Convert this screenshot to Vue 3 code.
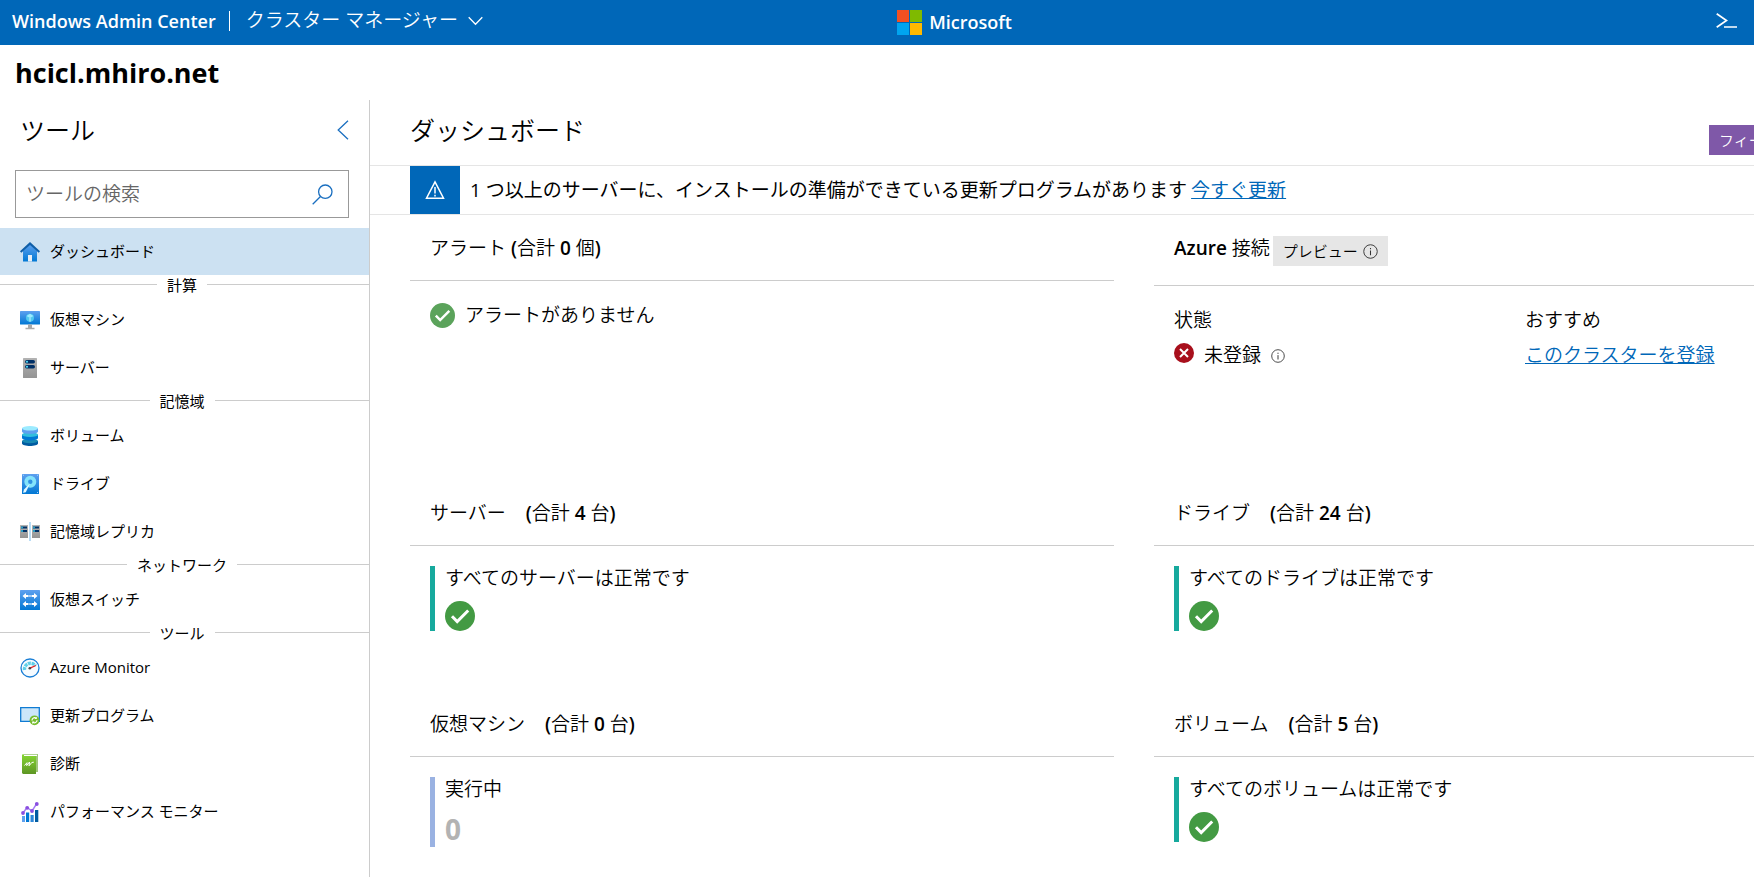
<script setup>
import { ref } from 'vue'

const search = ref('')

const groups = [
  { title: '', items: [{ id: 'home', label: 'ダッシュボード', active: true }] },
  {
    title: '計算',
    items: [
      { id: 'vm', label: '仮想マシン' },
      { id: 'server', label: 'サーバー' },
    ],
  },
  {
    title: '記憶域',
    items: [
      { id: 'volume', label: 'ボリューム' },
      { id: 'drive', label: 'ドライブ' },
      { id: 'replica', label: '記憶域レプリカ' },
    ],
  },
  { title: 'ネットワーク', items: [{ id: 'switch', label: '仮想スイッチ' }] },
  {
    title: 'ツール',
    items: [
      { id: 'monitor', label: 'Azure Monitor' },
      { id: 'update', label: '更新プログラム' },
      { id: 'diag', label: '診断' },
      { id: 'perf', label: 'パフォーマンス モニター' },
    ],
  },
]

const summaries = [
  { title: 'サーバー', count: 4, text: 'すべてのサーバーは正常です' },
  { title: 'ドライブ', count: 24, text: 'すべてのドライブは正常です' },
  { title: '仮想マシン', count: 0, text: '実行中', value: '0' },
  { title: 'ボリューム', count: 5, text: 'すべてのボリュームは正常です' },
]
</script>

<template>
  <div class="app">
    <svg class="sprite" width="0" height="0" aria-hidden="true">
      <defs>
        <linearGradient id="g-blue" x1="0" y1="0" x2="0" y2="1">
          <stop offset="0" stop-color="#5ea0ef" />
          <stop offset="1" stop-color="#0078d4" />
        </linearGradient>
        <linearGradient id="g-grey" x1="0" y1="0" x2="0" y2="1">
          <stop offset="0" stop-color="#b3b3b3" />
          <stop offset="1" stop-color="#949494" />
        </linearGradient>
        <linearGradient id="g-green" x1="0" y1="0" x2="0" y2="1">
          <stop offset="0" stop-color="#86d633" />
          <stop offset="1" stop-color="#5e9624" />
        </linearGradient>
      </defs>
      <symbol id="i-home" viewBox="0 0 20 20">
        <path d="M3 9 10 2l7 7v10.500H3z" fill="url(#g-blue)" />
        <path d="M10 0 20 9.300 18.700 10.700 10 2.900 1.300 10.700 0 9.300z" fill="#0f5ea8" />
        <path d="M8 13h4v6.500H8z" fill="#e8eef4" />
      </symbol>
      <symbol id="i-vm" viewBox="0 0 20 20">
        <rect y="1" width="20" height="13.500" rx=".6" fill="url(#g-blue)" />
        <circle cx="10" cy="7.800" r="4" fill="#50c8ee" />
        <path d="M10 3.800 13.500 6 10 8 6.500 6z" fill="#9ceaff" />
        <path d="M10 8v3.800" stroke="#c3f1ff" stroke-width="1" />
        <path d="M8 14.500h4v3.200h2.500v1.500h-9v-1.500H8z" fill="#aaa" />
      </symbol>
      <symbol id="i-server" viewBox="0 0 20 20">
        <rect x="3" width="14" height="20" rx=".6" fill="url(#g-grey)" />
        <rect x="5" y="2" width="10" height="3.400" rx="1.700" fill="#003067" />
        <rect x="5" y="7" width="10" height="3.400" rx="1.700" fill="#003067" />
        <circle cx="7" cy="3.700" r="1" fill="#50e6ff" />
        <circle cx="7" cy="8.700" r="1" fill="#50e6ff" />
      </symbol>
      <symbol id="i-volume" viewBox="0 0 20 20">
        <path d="M2 15h16v2.500c0 3.300-16 3.300-16 0z" fill="#005ba1" />
        <ellipse cx="10" cy="15" rx="8" ry="2.200" fill="#198ab3" />
        <path d="M2 8.500h16v3.500c0 3.300-16 3.300-16 0z" fill="#0078d4" />
        <ellipse cx="10" cy="8.700" rx="8" ry="2.300" fill="#32bedd" />
        <path d="M2 2h16v3.500c0 3.200-16 3.200-16 0z" fill="#5ea0ef" />
        <ellipse cx="10" cy="2.300" rx="8" ry="2.300" fill="#9cebff" />
      </symbol>
      <symbol id="i-drive" viewBox="0 0 20 20">
        <rect x="2" width="17" height="20" rx=".5" fill="url(#g-blue)" />
        <circle cx="10.300" cy="7.800" r="6" fill="#83e3fb" />
        <circle cx="10.300" cy="7.800" r="2.200" fill="#3193e2" />
        <path d="M10 9.500 5.800 18.200 3 18.800 4 15.500z" fill="#e2f8ff" />
        <path d="M3 1.300h1M17 1.300h1M17 18.500h1" stroke="#9cd2ff" />
      </symbol>
      <symbol id="i-replica" viewBox="0 0 20 20">
        <path d="M0 3h8v13H0zM12 3h8v13h-8z" fill="url(#g-grey)" />
        <path d="M1 4.500h6v2H1zM1 8h6v2H1zM13 4.500h6v2h-6zM13 8h6v2h-6z" fill="#003067" />
        <path d="M1 4.500h2v2H1zM1 8h2v2H1zM13 4.500h2v2h-2zM13 8h2v2h-2z" fill="#2d9fc4" />
        <path d="M9 0h2v19H9z" fill="#b9dcf5" />
      </symbol>
      <symbol id="i-switch" viewBox="0 0 20 20">
        <rect width="20" height="20" rx=".5" fill="url(#g-blue)" />
        <path d="M2.500 6 6 3v2h2.500v2H6v2zM17.500 6 14 3v2h-2.500v2H14v2zM2.500 14 6 11v2h2.500v2H6v2zM17.500 14 14 11v2h-2.500v2H14v2z" fill="#fff" />
        <path d="M9.300 5h1.400v2H9.300zM9.300 13h1.400v2H9.300z" fill="#d4e8fb" />
      </symbol>
      <symbol id="i-monitor" viewBox="0 0 20 20">
        <circle cx="10" cy="10" r="9" fill="#f6fbff" stroke="#1b7fd6" stroke-width="1.300" />
        <path d="M4.500 12a6 6 0 0 1 11-4" fill="none" stroke="#5fcfe8" stroke-width="3.400" stroke-dasharray="3 .7" />
        <path d="M9.500 10.300 15.800 7.500" stroke="#e62323" stroke-width="1.300" />
        <circle cx="9.800" cy="10.200" r="1.300" fill="#444" />
      </symbol>
      <symbol id="i-update" viewBox="0 0 20 20">
        <path d="M.7 1.700h18.600v13.600H.7z" fill="#cbe6f9" stroke="#0f7bd3" stroke-width="1.300" />
        <circle cx="14.500" cy="14.300" r="4.900" fill="#76bc2d" />
        <path d="M12 14.500a2.600 2.600 0 0 1 4.200-2.200M17 14.100a2.600 2.600 0 0 1-4.200 2.200" fill="none" stroke="#fff" stroke-width="1.200" />
        <path d="M16.800 10.700v2.400h-2.400zM12.200 17.900v-2.400h2.400z" fill="#fff" />
      </symbol>
      <symbol id="i-diag" viewBox="0 0 20 20">
        <path d="M4 0h14v18H4z" fill="#9fc67a" />
        <path d="M4 .8H17V2H4z" fill="#fff" />
        <path d="M2 1C2 .3 3 0 4 .5V2h12v18H3l-1-1z" fill="url(#g-green)" />
        <path d="M4.500 11.500 7 8.700 6.700 11.600 9.500 8 9 11.800 11.800 8.500 13.800 8.200" fill="none" stroke="#fff" stroke-width="1" />
      </symbol>
      <symbol id="i-perf" viewBox="0 0 20 20">
        <path d="M2 14h3v6H2z" fill="#5ea0ef" />
        <path d="M6 10.500h3.200V20H6z" fill="#0078d4" />
        <path d="M10.500 13h3.200v7h-3.200z" fill="#2b86d9" />
        <path d="M15 8h3.300v12H15z" fill="#005ba1" />
        <path d="m3 11 4-5.500 5 3.500 4.500-7" fill="none" stroke="#a67af4" stroke-width="1.400" />
        <g fill="#8a4fe0">
          <circle cx="3" cy="11" r="1.900" /><circle cx="7.200" cy="5.800" r="1.900" />
          <circle cx="12" cy="9" r="1.900" /><circle cx="16.800" cy="2" r="1.900" />
        </g>
      </symbol>
      <symbol id="i-info" viewBox="0 0 16 16">
        <circle cx="8" cy="8" r="7.200" fill="none" stroke="#333" stroke-width="1" />
        <path d="M8 7v5M8 4.200v1.400" stroke="#333" stroke-width="1.100" />
      </symbol>
      <symbol id="i-check" viewBox="0 0 30 30">
        <circle cx="15" cy="15" r="15" fill="currentColor" />
        <path d="m7 15.200 5.200 5.300L23.200 9.500" fill="none" stroke="#fff" stroke-width="3" />
      </symbol>
    </svg>

    <header class="topbar">
      <a class="brand" href="#">Windows Admin Center</a>
      <button class="solution" type="button">
        クラスター マネージャー
        <svg width="15" height="10" viewBox="0 0 15 10" aria-hidden="true">
          <path d="m.7 1.200 6.800 7 6.800-7" fill="none" stroke="#fff" stroke-width="1.300" />
        </svg>
      </button>
      <div class="microsoft">
        <svg width="25" height="25" viewBox="0 0 25 25" aria-hidden="true">
          <path d="M0 0h12v12H0z" fill="#f25022" /><path d="M13 0h12v12H13z" fill="#7fba00" />
          <path d="M0 13h12v12H0z" fill="#00a4ef" /><path d="M13 13h12v12H13z" fill="#ffb900" />
        </svg>
        Microsoft
      </div>
      <button class="shell" type="button" aria-label="PowerShell">
        <svg width="21" height="16" viewBox="0 0 21 16" aria-hidden="true">
          <path d="m.7.800 9.800 6.700L.7 14.200M8 14h13" fill="none" stroke="#fff" stroke-width="1.700" />
        </svg>
      </button>
    </header>

    <h1 class="host">hcicl.mhiro.net</h1>

    <div class="body">
      <aside class="sidebar">
        <div class="side-head">
          <h2>ツール</h2>
          <button type="button" aria-label="折りたたむ">
            <svg width="12" height="20" viewBox="0 0 12 20" aria-hidden="true">
              <path d="m11 .8-9.800 9.200 9.800 9.200" fill="none" stroke="#1a6fc0" stroke-width="1.300" />
            </svg>
          </button>
        </div>
        <form class="search" @submit.prevent>
          <input v-model="search" type="text" placeholder="ツールの検索" aria-label="ツールの検索" />
          <button type="submit" aria-label="検索">
            <svg width="21" height="21" viewBox="0 0 21 21" aria-hidden="true">
              <circle cx="13.300" cy="7.700" r="6.700" fill="none" stroke="#1a6fc0" stroke-width="1.300" />
              <path d="M8.500 12.500.7 20.300" stroke="#1a6fc0" stroke-width="1.300" />
            </svg>
          </button>
        </form>
        <nav>
          <template v-for="g in groups" :key="g.title">
            <h3 v-if="g.title" class="group"><span>{{ g.title }}</span></h3>
            <a v-for="i in g.items" :key="i.id" href="#" class="item" :class="{ active: i.active }">
              <svg width="20" height="20" aria-hidden="true"><use :href="'#i-' + i.id" /></svg>
              {{ i.label }}
            </a>
          </template>
        </nav>
      </aside>

      <main>
        <div class="content">
          <div class="page-head">
            <h2>ダッシュボード</h2>
            <button class="feedback" type="button">フィードバック</button>
          </div>
          <div class="notice">
            <span class="warn">
              <svg width="20" height="20" viewBox="0 0 20 20" aria-hidden="true">
                <path d="M10 1.800 18.500 18.200h-17z" fill="none" stroke="#fff" stroke-width="1.500" />
                <path d="M10 7v6.500M10 14.800v1.600" stroke="#fff" stroke-width="1.500" />
              </svg>
            </span>
            <p>1 つ以上のサーバーに、インストールの準備ができている更新プログラムがあります</p>
            <a href="#">今すぐ更新</a>
          </div>

          <div class="cards">
            <section class="card tall">
              <h3>アラート&nbsp;<b>(</b>合計&nbsp;<b>0</b>&nbsp;個<b>)</b></h3>
              <div class="no-alerts">
                <svg width="25" height="25" aria-hidden="true"><use href="#i-check" /></svg>
                アラートがありません
              </div>
            </section>

            <section class="card tall">
              <h3>
                <b>Azure</b>&nbsp;接続
                <span class="preview">プレビュー
                  <svg width="15" height="15" aria-hidden="true"><use href="#i-info" /></svg>
                </span>
              </h3>
              <dl class="azure">
                <div>
                  <dt>状態</dt>
                  <dd class="unregistered">
                    <svg width="20" height="20" viewBox="0 0 20 20" aria-hidden="true">
                      <circle cx="10" cy="10" r="10" fill="#a80f1c" />
                      <path d="m6 6 8 8M14 6l-8 8" stroke="#fff" stroke-width="2" />
                    </svg>
                    <span>未登録</span>
                    <svg class="info" width="14" height="14" aria-hidden="true"><use href="#i-info" /></svg>
                  </dd>
                </div>
                <div>
                  <dt>おすすめ</dt>
                  <dd><a href="#">このクラスターを登録</a></dd>
                </div>
              </dl>
            </section>

            <section v-for="s in summaries" :key="s.title" class="card">
              <h3>
                {{ s.title }}
                <span class="total"><b>(</b>合計&nbsp;<b>{{ s.count }}</b>&nbsp;台<b>)</b></span>
              </h3>
              <div class="status" :class="{ running: s.value }">
                <p>{{ s.text }}</p>
                <strong v-if="s.value">{{ s.value }}</strong>
                <svg v-else width="30" height="30" aria-hidden="true"><use href="#i-check" /></svg>
              </div>
            </section>
          </div>
        </div>
      </main>
    </div>
  </div>
</template>

<style>
body {
  margin: 0;
  overflow: hidden;
  background: #fff;
}
</style>

<style scoped>
.app {
  display: flex;
  flex-direction: column;
  height: 100vh;
  overflow: hidden;
  color: #000;
  font-family: "Open Sans", "Noto Sans CJK JP", sans-serif;
  font-size: 19px;
  font-weight: 350;
  line-height: 25px;
}
.sprite {
  position: absolute;
}
svg {
  display: block;
  flex: none;
}
h1, h2, h3, p, dl, dd {
  margin: 0;
  font-weight: inherit;
}
b {
  font-weight: 600;
}
button {
  padding: 0;
  border: 0;
  background: none;
  color: inherit;
  font: inherit;
  cursor: pointer;
}
a {
  color: #0067b8;
}

.topbar {
  display: flex;
  align-items: center;
  flex: none;
  height: 45px;
  padding: 0 17px 0 12px;
  box-sizing: border-box;
  background: #0067b8;
  color: #fff;
}
.brand {
  padding-right: 13px;
  border-right: 1px solid #fff;
  color: #fff;
  font-size: 18px;
  font-weight: 600;
  line-height: 20px;
  text-decoration: none;
  margin-bottom: 4px;
}
.solution {
  display: flex;
  align-items: center;
  gap: 10px;
  margin-left: 16px;
  margin-bottom: 4px;
}
.topbar::before,
.topbar::after {
  content: "";
}
.topbar::before {
  order: 1;
  flex: 10;
}
.microsoft {
  order: 2;
  display: flex;
  align-items: center;
  gap: 7px;
  font-size: 18px;
  font-weight: 600;
}
.topbar::after {
  order: 3;
  flex: 17;
}
.shell {
  order: 4;
  margin-bottom: 4px;
}

.host {
  flex: none;
  height: 55px;
  padding: 0 15px;
  font-size: 27px;
  font-weight: 700;
  line-height: 55px;
}
.body {
  display: flex;
  flex: 1;
  min-height: 0;
}
.sidebar {
  flex: none;
  width: 370px;
  box-sizing: border-box;
  border-right: 1px solid #ccc;
}
.side-head {
  display: flex;
  align-items: center;
  justify-content: space-between;
  height: 60px;
  padding: 0 20px;
}
h2 {
  font-size: 25px;
  line-height: 30px;
}
.search {
  display: flex;
  align-items: center;
  height: 48px;
  box-sizing: border-box;
  margin: 10px 20px 10px 15px;
  padding: 0 15px 0 10px;
  border: 1px solid #999;
}
.search input {
  flex: 1;
  min-width: 0;
  padding: 0;
  border: 0;
  outline: 0;
  background: none;
  font: inherit;
}
.search input::placeholder {
  color: #666;
  opacity: 1;
}
nav {
  display: flex;
  flex-direction: column;
  gap: 1px;
  font-size: 15px;
  font-weight: 400;
  line-height: 19px;
}
.item {
  display: flex;
  align-items: center;
  gap: 10px;
  height: 47px;
  padding: 0 20px;
  color: #000;
  text-decoration: none;
}
.item.active {
  background: #cce1f2;
}
.group {
  display: flex;
  gap: 10px;
  font-size: 15px;
}
.group::before,
.group::after {
  content: "";
  height: 8px;
  border-bottom: 1px solid #ccc;
}
.group::before {
  flex: 1 1 0;
}
.group::after {
  flex: 1 1 5px;
}

main {
  flex: 1;
  min-width: 0;
  overflow: hidden;
}
.content {
  min-width: 1528px;
}
.page-head {
  display: flex;
  align-items: center;
  justify-content: space-between;
  height: 65px;
  padding: 0 40px;
}
.page-head h2 {
  padding-bottom: 6px;
}
.feedback {
  align-self: flex-end;
  min-width: 149px;
  height: 30px;
  margin-bottom: 10px;
  padding: 0 10px;
  background: #7f58a8;
  color: #fff;
  font-size: 15px;
  text-align: left;
}
.notice {
  display: flex;
  align-items: center;
  height: 48px;
  padding: 0 40px;
  border: solid #e5e5e5;
  border-width: 1px 0;
  font-weight: 400;
}
.warn {
  display: grid;
  place-items: center;
  width: 50px;
  height: 48px;
  background: #0067b8;
}
.notice p {
  margin: 0 4px 0 10px;
}
.cards {
  display: grid;
  grid-template-columns: repeat(2, minmax(0, 1fr));
  gap: 0 40px;
  padding: 0 40px;
}
.card {
  min-height: 211px;
}
.card.tall {
  min-height: 265px;
}
.card h3 {
  display: flex;
  padding: 21px 20px 19px;
  border-bottom: 1px solid #ccc;
  font-size: 19px;
}
.preview {
  display: flex;
  align-items: center;
  gap: 5px;
  height: 30px;
  margin-left: 3px;
  padding: 0 10px;
  background: #e6e6e6;
  font-size: 15px;
}
.total {
  margin-left: 20px;
}
.no-alerts {
  display: flex;
  align-items: center;
  gap: 10px;
  padding: 22px 20px;
}
.no-alerts svg {
  color: #5ba35b;
}
.azure {
  display: grid;
  grid-template-columns: 1fr 1fr;
  gap: 18px;
  padding: 22px 0 0 20px;
}
.azure dd {
  margin-top: 10px;
}
.unregistered {
  display: flex;
  gap: 10px;
}
.unregistered .info {
  align-self: center;
}
.status {
  margin: 20px 20px 0;
  padding-left: 10px;
  border-left: 5px solid #16a99d;
  color: #439a43;
}
.status p {
  padding-bottom: 10px;
  color: #000;
}
.status.running {
  border-color: #9ab2e2;
}
.status strong {
  display: block;
  color: #b3b3b3;
  font-size: 28px;
  font-weight: 700;
  line-height: 35px;
}
</style>
